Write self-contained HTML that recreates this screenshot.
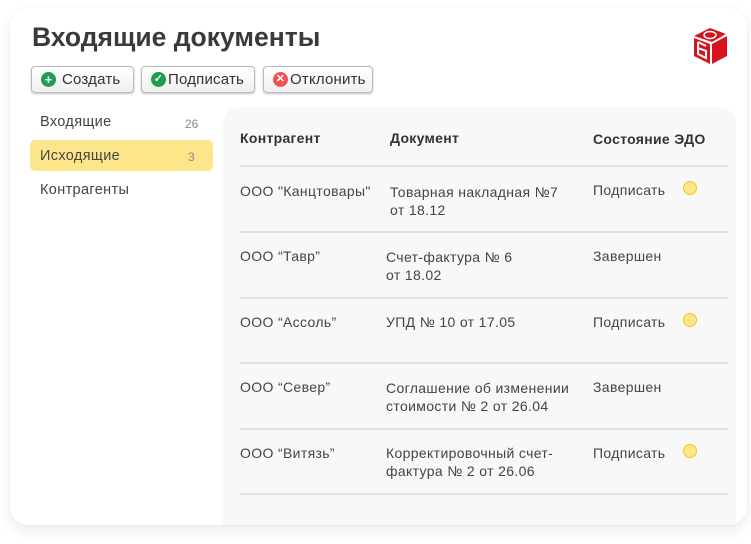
<!DOCTYPE html><html><head><meta charset="utf-8"><style>
body{margin:0;width:751px;height:544px;background:#fff;font-family:"Liberation Sans",sans-serif;color:#333;position:relative;overflow:hidden}
.a{position:absolute;white-space:nowrap}
.card{position:absolute;left:10px;top:8px;width:737px;height:517px;background:#fff;border-radius:18px;box-shadow:0 6px 14px rgba(0,0,0,.08),0 0 3px rgba(0,0,0,.04)}
.panel{position:absolute;left:223px;top:107px;width:513px;height:418px;background:#f8f8f8;border-radius:16px 16px 0 0}
.btn{position:absolute;top:66px;height:27px;border:1px solid #bbb;border-radius:4px;background:linear-gradient(#fff,#f0f0f0);box-shadow:0 1px 2px rgba(0,0,0,.25);font-size:15px;line-height:25px;box-sizing:border-box;letter-spacing:0.2px}
.ic{position:absolute;left:9px;top:5px;width:15px;height:15px;border-radius:50%;color:#fff;font-size:13px;line-height:15px;text-align:center;font-weight:bold}
.line{position:absolute;left:240px;width:488px;height:2px;background:#e2e2e2}
.t{font-size:14px;color:#444;line-height:18px;letter-spacing:0.35px}
.h{font-size:14px;font-weight:bold;color:#333;letter-spacing:0.3px}
.dot{position:absolute;width:12px;height:12px;border-radius:50%;background:#fde68a;border:1.5px solid #f5c518}
</style></head><body>
<div class="card"></div>
<div class="a" style="left:32px;top:22px;font-size:26.5px;font-weight:bold;color:#3a3a3a">Входящие документы</div>
<svg class="a" style="left:692px;top:24px" width="38" height="42" viewBox="0 0 38 42"><path d="M2 12 L18 4 L34 10 L20 18 Z" fill="#d7141d"/><path d="M2 14 L18 20 L18 40 L2 32 Z" fill="#d7141d"/><path d="M20 20 L35 12 L35 32 L20 40 Z" fill="#d7141d"/><path d="M6 18 L14 22 M6 18 L6 30 L14 34 L14 27 L6 24" stroke="#fff" stroke-width="2" fill="none"/><ellipse cx="18" cy="11" rx="6" ry="3.5" fill="none" stroke="#fff" stroke-width="1.5"/></svg>
<div class="btn" style="left:31px;width:103px"><span class="ic" style="background:#1e9e4a">+</span><span style="position:absolute;left:30px">Создать</span></div>
<div class="btn" style="left:141px;width:114px"><span class="ic" style="background:#1e9e4a;font-size:11px">✓</span><span style="position:absolute;left:26px">Подписать</span></div>
<div class="btn" style="left:263px;width:110px"><span class="ic" style="background:#ef5350;font-size:11px">✕</span><span style="position:absolute;left:26px">Отклонить</span></div>
<div class="a t" style="left:40px;top:113px;font-size:14.5px">Входящие</div>
<div class="a" style="left:185px;top:117px;font-size:12px;color:#888">26</div>
<div class="a" style="left:30px;top:140px;width:183px;height:31px;background:#fde68a;border-radius:5px"></div>
<div class="a t" style="left:40px;top:147px;font-size:14.5px">Исходящие</div>
<div class="a" style="left:188px;top:150px;font-size:12px;color:#888">3</div>
<div class="a t" style="left:40px;top:181px;font-size:14.5px">Контрагенты</div>
<div class="panel"></div>
<div class="a h" style="left:240px;top:130px">Контрагент</div>
<div class="a h" style="left:390px;top:130px">Документ</div>
<div class="a h" style="left:593px;top:131px">Состояние ЭДО</div>
<div class="line" style="top:165px"></div>
<div class="line" style="top:231px"></div>
<div class="line" style="top:297px"></div>
<div class="line" style="top:362px"></div>
<div class="line" style="top:428px"></div>
<div class="line" style="top:493px"></div>
<div class="a t" style="left:240px;top:182px">ООО "Канцтовары"</div>
<div class="a t" style="left:390px;top:183px">Товарная накладная №7<br>от 18.12</div>
<div class="a t" style="left:593px;top:181px">Подписать</div><div class="dot" style="left:683px;top:181px"></div>
<div class="a t" style="left:240px;top:247px">ООО “Тавр”</div>
<div class="a t" style="left:386px;top:248px">Счет-фактура № 6<br>от 18.02</div>
<div class="a t" style="left:593px;top:247px">Завершен</div>
<div class="a t" style="left:240px;top:313px">ООО “Ассоль”</div>
<div class="a t" style="left:386px;top:313px">УПД № 10 от 17.05</div>
<div class="a t" style="left:593px;top:313px">Подписать</div><div class="dot" style="left:683px;top:313px"></div>
<div class="a t" style="left:240px;top:378px">ООО “Север”</div>
<div class="a t" style="left:386px;top:379px">Соглашение об изменении<br>стоимости № 2 от 26.04</div>
<div class="a t" style="left:593px;top:378px">Завершен</div>
<div class="a t" style="left:240px;top:444px">ООО “Витязь”</div>
<div class="a t" style="left:386px;top:444px">Корректировочный счет-<br>фактура № 2 от 26.06</div>
<div class="a t" style="left:593px;top:444px">Подписать</div><div class="dot" style="left:683px;top:444px"></div>
</body></html>
